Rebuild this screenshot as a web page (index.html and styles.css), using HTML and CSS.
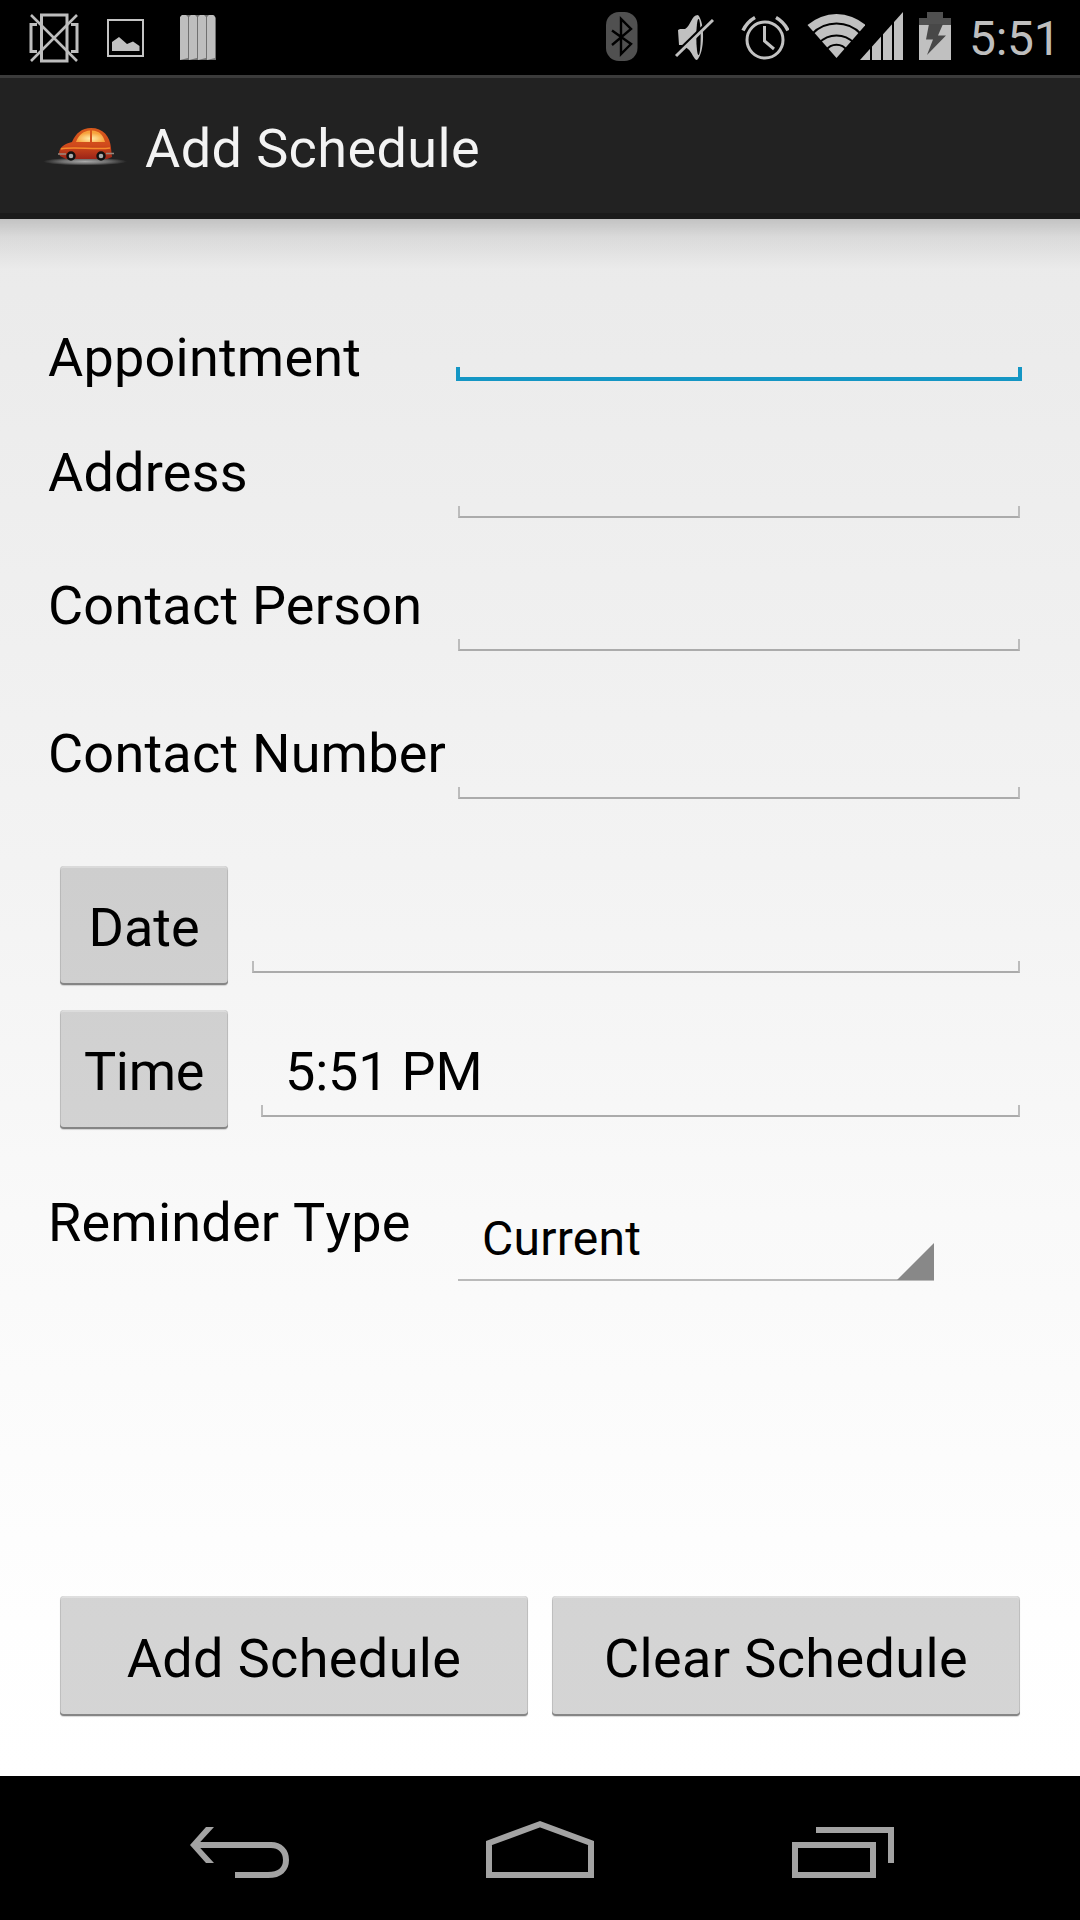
FILE: index.html
```html
<!DOCTYPE html>
<html lang="en">
<head>
<meta charset="utf-8">
<title>Add Schedule</title>
<link rel="stylesheet" href="styles.css">
</head>
<body>
<div class="screen">
  <header class="status">
    <div class="status-group status-left">
      <svg width="52" height="52" viewBox="28 11 52 52" fill="none" stroke="#bdbdbd" stroke-width="3"><path d="M41.5 15H67V61H41.5ZM37 24.5H31V51.5H37M71 24.5H77V51.5H71"/><path d="M31 15L77 61M77 15L31 61" stroke-width="2.6"/></svg>
      <svg width="38" height="40" viewBox="107 17 38 40"><path d="M108 20H143V56H108Z" fill="none" stroke="#c4c4c4" stroke-width="2"/><path d="M112 51V42L119 37L127 44L133 41.500L139.500 46V51Z" fill="#c0c0c0"/></svg>
      <svg width="36" height="46" viewBox="180 14 36 46"><path d="M182 15H214L216 18V60H180V18Z" fill="#707070"/><path d="M180 17L182 15H186L188 17V58L180 60ZM189 17L191 15H195L197 17V58L189 60ZM198 17L200 15H204L206 17V58L198 60ZM207 17L209 15H213L215 17V58L207 60Z" fill="#bebebe"/></svg>
    </div>
    <div class="status-group status-right">
      <svg width="32" height="50" viewBox="606 12 32 50"><rect x="606" y="12" width="31.500" height="49" rx="13" fill="#505050"/><path d="M612 30.500L631 44L621 54V19L631 29L612 45" fill="none" stroke="#000" stroke-width="2.400"/></svg>
      <svg width="40" height="50" viewBox="674 12 40 50"><path d="M678 30L680 29H685C691 26 691 15 698 15C705 22 705 53 697 60C694 60 692 52 688 49L683 45H679Z" fill="#c0c0c0"/><ellipse cx="698.500" cy="37" rx="2.200" ry="18" fill="#000"/><path d="M674 55L711 19" stroke="#000" stroke-width="3"/><path d="M676 56L713 20" stroke="#c0c0c0" stroke-width="3"/></svg>
      <svg width="48" height="50" viewBox="741 12 48 50" fill="none" stroke="#c2c2c2" stroke-width="3"><circle cx="765" cy="40" r="18"/><path d="M764.500 26V41L774 49"/><path d="M743 30.500Q747 22 755 17.500M776 17.500Q784 22 788 30.500" stroke-width="3.500"/></svg>
      <svg class="wifi" width="58" height="50" viewBox="807 12 58 50"><path d="M836.500 58L807.500 25A44 44 0 0 1 865.500 25Z" fill="#c0c0c0"/><path d="M812 34A34 34 0 0 1 861 34M819 43A24 24 0 0 1 854 43M826 50.500A12.500 12.500 0 0 1 847 50.500" fill="none" stroke="#000" stroke-width="2"/></svg>
      <svg width="43" height="50" viewBox="860 12 43 50"><path d="M860 60L903 12V60Z" fill="#c0c0c0"/><path d="M871 12V60M882 12V60M893 12V60" stroke="#000" stroke-width="2"/></svg>
      <svg width="32" height="50" viewBox="919 12 32 50"><path d="M919 18H927V12H943V18H951V26H919Z" fill="#505050"/><path d="M919 25H951V60H919Z" fill="#c0c0c0"/><path d="M929 24H943L938 35.500H946L927 55L933 39.500H926Z" fill="#484848"/></svg>
      <span class="clock">5:51</span>
    </div>
  </header>

  <div class="appbar">
    <svg width="84" height="48" viewBox="43 122 84 48">
      <defs>
        <radialGradient id="ground"><stop offset="0" stop-color="#aaa"/><stop offset=".55" stop-color="#707070"/><stop offset="1" stop-color="#222"/></radialGradient>
        <linearGradient id="paint" x1="0" y1="0" x2="0" y2="1"><stop offset="0" stop-color="#d85a1c"/><stop offset=".55" stop-color="#d04a1c"/><stop offset="1" stop-color="#9c2418"/></linearGradient>
        <radialGradient id="glass" cy=".7"><stop offset="0" stop-color="#fff0b0"/><stop offset="1" stop-color="#f8a23c"/></radialGradient>
      </defs>
      <ellipse cx="85" cy="161.500" rx="42" ry="4" fill="url(#ground)"/>
      <path d="M59 153C60 146 65 144 72 142C76 133 82 128 91 128C103 128 110 136 111 148L112 157L107 159H66L60 156Z" fill="url(#paint)"/>
      <path d="M76 142C79 134 84 131 90 130.500V142ZM92 130.500C99 131 103 134 105 142H92Z" fill="url(#glass)"/>
      <path d="M61 149C70 146 96 150 110 148" stroke="#f58a2a" stroke-width="1.500" fill="none"/>
      <path d="M58 154H66M106 153.500H114" stroke="#9a8a80" stroke-width="1.600"/>
      <g fill="#aaa" stroke="#101010" stroke-width="2.400"><circle cx="71" cy="156" r="3.500"/><circle cx="101" cy="156" r="3.500"/></g>
    </svg>
    <h1 class="title">Add Schedule</h1>
  </div>

  <main class="form">
    <div class="row row-appointment"><span class="label">Appointment</span><div class="field focused"><div class="line"></div></div></div>
    <div class="row row-address"><span class="label">Address</span><div class="field"><div class="line"></div></div></div>
    <div class="row row-person"><span class="label">Contact Person</span><div class="field"><div class="line"></div></div></div>
    <div class="row row-number"><span class="label">Contact Number</span><div class="field"><div class="line"></div></div></div>
    <div class="pick pick-date"><button class="btn">Date</button><div class="field"><div class="line"></div></div></div>
    <div class="pick pick-time"><button class="btn">Time</button><div class="field"><span class="value">5:51 PM</span><div class="line"></div></div></div>
    <div class="row row-reminder"><span class="label">Reminder Type</span>
      <div class="spinner"><span class="choice">Current</span><svg width="37" height="37" viewBox="0 0 37 37"><path d="M37 0V37H0Z" fill="#888"/></svg></div>
    </div>
    <div class="actions"><button class="btn">Add Schedule</button><button class="btn">Clear Schedule</button></div>
  </main>

  <nav class="navbar">
    <svg width="102" height="60" viewBox="188 1820 102 60" fill="none" stroke="#a3a3a3" stroke-width="6"><path d="M194 1845H271C280 1845 286 1851 286 1860C286 1869 280 1875 268 1875H235"/><path d="M190 1845L206 1827H214L197.500 1845L214 1863H206Z" fill="#a3a3a3" stroke="none"/></svg>
    <svg width="108" height="60" viewBox="486 1820 108 60" fill="none" stroke="#a3a3a3" stroke-width="6"><path d="M489 1875V1843L540 1824.200L591 1843V1875Z"/></svg>
    <svg width="102" height="60" viewBox="792 1820 102 60" fill="none" stroke="#a3a3a3" stroke-width="6"><path d="M795 1845H873V1875H795ZM816 1830H891V1863"/></svg>
  </nav>
</div>
</body>
</html>
```

FILE: styles.css
```css
* { box-sizing: border-box; }
body { margin: 0; background: #000; font-family: Roboto, sans-serif; color: #000; }
svg { display: block; flex: none; }

.screen { width: 1080px; height: 1920px; display: flex; flex-direction: column; overflow: hidden; }

.status { height: 75px; flex: none; display: flex; justify-content: space-between; padding: 0 25px 0 28px; background: #000; }
.status-group { display: flex; align-items: center; height: 74px; }
.status-left { gap: 27px; }
.status-left svg:last-child { margin-left: 8px; }
.status-right svg { margin-right: 16px; }
.status-right svg:nth-child(1) { margin-right: 36px; }
.status-right svg:nth-child(2) { margin-right: 27px; }
.status-right svg:nth-child(3) { margin-right: 18px; }
.status-right .wifi { margin-right: -5px; }
.status-right svg:nth-child(6) { margin-right: 18px; }
.clock { width: 86px; margin-top: 4px; font-size: 48px; line-height: 56px; letter-spacing: -.3px; color: #bebebe; white-space: nowrap; }

.appbar {
  height: 144px; flex: none; display: flex; align-items: center; gap: 18px; padding: 0 43px;
  background: #222; border-top: 3px solid #3b3b3b; border-bottom: 6px solid #1b1b1b;
}
.title { margin: 6px 0 0; font-size: 54px; line-height: 64px; font-weight: 400; letter-spacing: .4px; color: #f3f3f3; }

.form {
  flex: 1; padding: 0 60px 0 48px; font-size: 54px; line-height: 64px;
  background:
    linear-gradient(rgba(0,0,0,.17), rgba(0,0,0,.07) 36%, rgba(0,0,0,0)) top / 100% 50px no-repeat,
    linear-gradient(#eaeaea, #f4f4f4 46%, #f9f9f9 64%, #fefefe 90%, #fff);
}
.row { display: grid; grid-template-columns: 410px 1fr; grid-template-rows: 100%; }
.label { white-space: nowrap; letter-spacing: .22px; }
.row-appointment { height: 162px; padding-top: 107px; }
.row-address { height: 137px; padding-top: 60px; }
.row-person { height: 133px; padding-top: 56px; }
.row-number { height: 148px; padding-top: 71px; }
.row-reminder { height: 152px; padding-top: 62px; }
.row-reminder .label { font-kerning: none; }

.field { display: flex; flex-direction: column; justify-content: flex-end; }
.line { height: 12px; border: 2px solid #ababab; border-top: 0; border-left-color: #bcbcbc; border-right-color: #bcbcbc; }
.focused { margin: 0 -2px; }
.row .focused .line { height: 14px; border: 4px solid #1496c4; border-top: 0; }

.pick { height: 119px; display: grid; padding-left: 12px; }
.pick-date { grid-template-columns: 192px 1fr; margin-top: 67px; }
.pick-time { grid-template-columns: 201px 1fr; margin-top: 25px; }
.pick .field { padding-bottom: 12px; }
.pick .btn { width: 168px; }
.pick-time .btn { letter-spacing: -.3px; }
.value { padding-left: 24px; margin-bottom: 1px; letter-spacing: -.2px; }

.btn {
  height: 119px; border: 0; border-radius: 4px; padding: 5px 0 0; font: inherit; color: #000;
  background: rgba(0,0,0,.15); white-space: nowrap;
  box-shadow: inset 0 -2px 0 #858585, inset 0 2px 0 rgba(255,255,255,.25), inset 1px 0 0 rgba(0,0,0,.1), inset -1px 0 0 rgba(0,0,0,.1), 0 1px 1px rgba(0,0,0,.15);
}

.spinner { width: 476px; display: flex; justify-content: space-between; align-items: flex-end; border-bottom: 2px solid #bababa; }
.choice { font-size: 48px; line-height: 56px; padding-left: 24px; margin-bottom: 12px; letter-spacing: .25px; }
.spinner svg { margin-bottom: -1px; }

.actions { display: grid; grid-template-columns: 468px 468px; gap: 24px; margin-top: 315px; padding-left: 12px; }
.actions .btn { height: 120px; letter-spacing: .37px; background: rgba(0,0,0,.164); }

.navbar { height: 144px; flex: none; display: flex; align-items: center; padding: 4px 0 0 188px; background: #000; }
.navbar svg { margin-right: 196px; }
.navbar svg:nth-child(2) { margin-right: 198px; }
.navbar svg:last-child { margin-right: 0; }
```
